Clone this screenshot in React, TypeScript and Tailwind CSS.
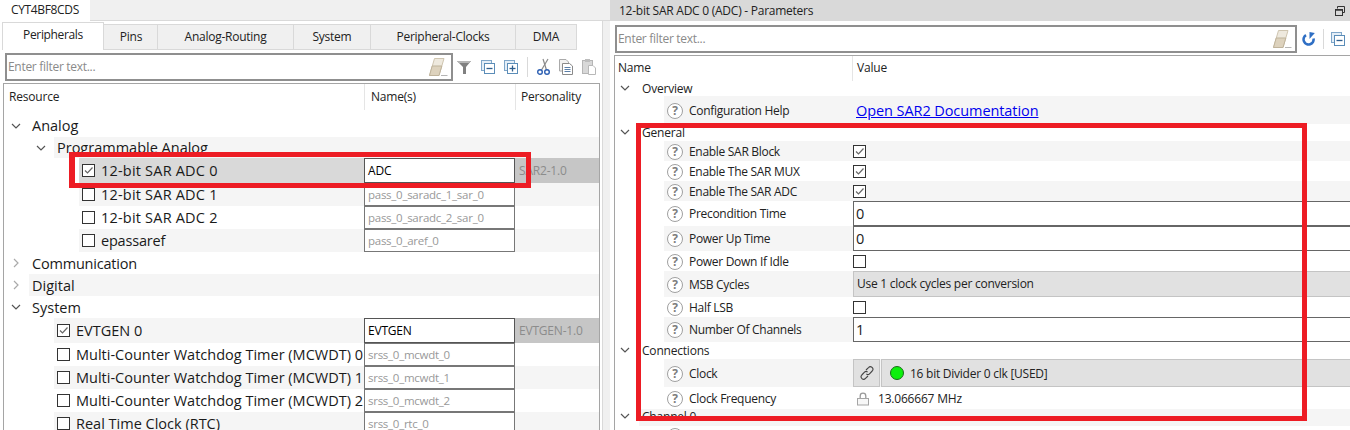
import React from "react";

const FONT = "[font-family:'Open_Sans','Noto_Sans',sans-serif]";

function Chevron({ open }: { open: boolean }) {
  return (
    <svg width="10" height="10" viewBox="0 0 10 10" className="shrink-0">
      {open ? (
        <path d="M1 3 L5 7 L9 3" fill="none" stroke="#555" strokeWidth="1.2" />
      ) : (
        <path d="M3 1 L7 5 L3 9" fill="none" stroke="#aaa" strokeWidth="1.2" />
      )}
    </svg>
  );
}

function Check({ on }: { on: boolean }) {
  return (
    <span className="w-[13px] h-[13px] shrink-0 border border-[#333] bg-white flex items-center justify-center">
      {on && (
        <svg width="11" height="11" viewBox="0 0 11 11">
          <path d="M2 5.5 L4.5 8 L9.5 2.5" fill="none" stroke="#666" strokeWidth="1.2" />
        </svg>
      )}
    </span>
  );
}

function Eraser() {
  return (
    <svg width="20" height="20" viewBox="0 0 20 20" className="shrink-0">
      <path d="M6.5 1.5 H16 L11 18.5 H1.5 Z" fill="#eee9de" stroke="#cfc5b0" />
      <path d="M4.2 9 L13.8 9 L11 18.5 H1.5 Z" fill="#ddd2bd" stroke="#bfb39b" />
      <path d="M13 18.5 H19.5" stroke="#b5b5b5" strokeWidth="1" />
    </svg>
  );
}

function Filter() {
  return (
    <svg width="16" height="16" viewBox="0 0 16 16" className="shrink-0">
      <path d="M1 2 H15 L10 8 V15 H7 V8 Z" fill="#808080" />
      <path d="M1 2 H15 L13 4 H3 Z" fill="#b5b5b5" />
    </svg>
  );
}

function Collapse({ plus }: { plus?: boolean }) {
  return (
    <svg width="14" height="14" viewBox="0 0 14 14" className="shrink-0">
      <rect x="0.5" y="0.5" width="10" height="10" fill="#e4eef7" stroke="#7fa6c9" />
      <rect x="3.5" y="3.5" width="10" height="10" fill="#fff" stroke="#5b8db8" />
      <path d="M5.5 8.5 H11.5" stroke="#2f5f8f" strokeWidth="1.3" />
      {plus && <path d="M8.5 5.5 V11.5" stroke="#2f5f8f" strokeWidth="1.3" />}
    </svg>
  );
}

function Cut() {
  return (
    <svg width="13" height="18" viewBox="0 0 13 18" className="shrink-0">
      <path d="M11 1 L4.5 12" stroke="#8a8a8a" strokeWidth="1.2" />
      <path d="M6 1 L9.5 12" stroke="#8a8a8a" strokeWidth="1.2" />
      <circle cx="3" cy="14" r="2.3" fill="none" stroke="#2c5fb3" strokeWidth="1.4" />
      <circle cx="10" cy="14" r="2.3" fill="none" stroke="#2c5fb3" strokeWidth="1.4" />
    </svg>
  );
}

function Copy() {
  return (
    <svg width="14" height="18" viewBox="0 0 14 18" className="shrink-0">
      <path d="M0.5 1.5 H7 L9.5 4 V13 H0.5 Z" fill="#f2f2f2" stroke="#aaa" />
      <path d="M3.5 5.5 H10.5 L13.5 8 V16.5 H3.5 Z" fill="#fff" stroke="#8a8a8a" />
      <path d="M5.5 9.5 H11.5 M5.5 11.5 H11.5 M5.5 13.5 H11.5" stroke="#5b7fa8" />
    </svg>
  );
}

function Paste() {
  return (
    <svg width="14" height="18" viewBox="0 0 14 18" className="shrink-0">
      <rect x="0.5" y="2.5" width="10" height="13" fill="#d8d8d8" stroke="#b5b5b5" />
      <rect x="3" y="1" width="5" height="3" fill="#bdbdbd" />
      <path d="M6.5 7.5 H11 L13.5 10 V16.5 H6.5 Z" fill="#fff" stroke="#b8b8b8" />
    </svg>
  );
}

function Refresh() {
  return (
    <svg width="14" height="14" viewBox="0 0 14 14" className="shrink-0">
      <path d="M4 3.2 A5 5 0 1 0 11.5 6.5" fill="none" stroke="#2f6fc4" strokeWidth="2.6" />
      <path d="M7.5 0 V7 L12.8 1 Z" fill="#2f6fc4" />
    </svg>
  );
}

function Restore() {
  return (
    <svg width="10" height="10" viewBox="0 0 10 10">
      <path d="M2.5 2.5 V0.5 H9.5 V6.5 H7.5" fill="none" stroke="#333" />
      <rect x="0.5" y="3.5" width="7" height="6" fill="none" stroke="#333" />
      <path d="M0.5 4 H7.5" stroke="#333" strokeWidth="1.5" />
    </svg>
  );
}

function Link() {
  return (
    <svg width="14" height="14" viewBox="0 0 14 14">
      <path d="M6 4 L8.5 1.6 A2.2 2.2 0 0 1 12.2 5 L9.5 7.8 A2.2 2.2 0 0 1 6.4 7.8" fill="none" stroke="#444" strokeWidth="1.1" />
      <path d="M8 10 L5.5 12.4 A2.2 2.2 0 0 1 1.8 9 L4.5 6.2 A2.2 2.2 0 0 1 7.6 6.2" fill="none" stroke="#444" strokeWidth="1.1" />
    </svg>
  );
}

function Lock() {
  return (
    <svg width="14" height="14" viewBox="0 0 14 14">
      <path d="M4.2 6.5 V4 A2.8 2.8 0 0 1 9.8 4 V6.5" fill="none" stroke="#999" strokeWidth="1.3" />
      <rect x="1.5" y="6.5" width="11" height="6.5" fill="#f7f7f7" stroke="#a5a5a5" />
    </svg>
  );
}

function Help() {
  return (
    <span className="w-[16px] h-[16px] shrink-0 rounded-full border-[1.5px] border-[#a0a0a0] bg-white text-[#7d7d7d] text-[12px] font-bold leading-[13px] text-center">
      ?
    </span>
  );
}

function FilterBox({ className }: { className: string }) {
  return (
    <div className={`flex items-center justify-between bg-white border-2 border-[#8f8f8f] pr-[3px] ${className}`}>
      <span className="text-[12px] text-[#8a8a8a] pl-[1px] tracking-[-0.3px]">Enter filter text...</span>
      <Eraser />
    </div>
  );
}

type LeftRow = {
  h: string;
  indent: string;
  bg: string;
  chevron?: "open" | "closed";
  chevronPos?: string;
  check?: boolean;
  label: string;
  low?: boolean;
  tr?: string;
  name?: string;
  nameActive?: boolean;
  personality?: string;
};

const leftRows: LeftRow[] = [
  { h: "h-[22px]", indent: "pl-[25px]", bg: "", chevron: "open", chevronPos: "ml-[7px]", label: "Analog" },
  { h: "h-[21px]", indent: "pl-[50px]", bg: "bg-[#f5f5f5]", chevron: "open", chevronPos: "ml-[32px]", label: "Programmable Analog" },
  { h: "h-[25px]", indent: "pl-[75px]", bg: "bg-[#d9d9d9]", check: true, label: "12-bit SAR ADC 0", tr: "tracking-[0.2px]", name: "ADC", nameActive: true, personality: "SAR2-1.0" },
  { h: "h-[23px]", indent: "pl-[75px]", bg: "bg-[#f5f5f5]", check: false, label: "12-bit SAR ADC 1", tr: "tracking-[0.2px]", name: "pass_0_saradc_1_sar_0" },
  { h: "h-[23px]", indent: "pl-[75px]", bg: "", check: false, label: "12-bit SAR ADC 2", tr: "tracking-[0.2px]", name: "pass_0_saradc_2_sar_0" },
  { h: "h-[23px]", indent: "pl-[75px]", bg: "bg-[#f5f5f5]", check: false, label: "epassaref", tr: "tracking-[-0.2px]", name: "pass_0_aref_0" },
  { h: "h-[22px]", indent: "pl-[25px]", bg: "", chevron: "closed", chevronPos: "ml-[7px]", label: "Communication", low: true, tr: "tracking-[-0.2px]" },
  { h: "h-[22px]", indent: "pl-[25px]", bg: "bg-[#f5f5f5]", chevron: "closed", chevronPos: "ml-[7px]", label: "Digital", low: true },
  { h: "h-[22px]", indent: "pl-[25px]", bg: "", chevron: "open", chevronPos: "ml-[7px]", label: "System", low: true },
  { h: "h-[25px]", indent: "pl-[50px]", bg: "bg-[#f5f5f5]", check: true, label: "EVTGEN 0", name: "EVTGEN", nameActive: true, personality: "EVTGEN-1.0" },
  { h: "h-[23px]", indent: "pl-[50px]", bg: "", check: false, label: "Multi-Counter Watchdog Timer (MCWDT) 0", name: "srss_0_mcwdt_0" },
  { h: "h-[23px]", indent: "pl-[50px]", bg: "bg-[#f5f5f5]", check: false, label: "Multi-Counter Watchdog Timer (MCWDT) 1", name: "srss_0_mcwdt_1" },
  { h: "h-[23px]", indent: "pl-[50px]", bg: "", check: false, label: "Multi-Counter Watchdog Timer (MCWDT) 2", name: "srss_0_mcwdt_2" },
  { h: "h-[23px]", indent: "pl-[50px]", bg: "bg-[#f5f5f5]", check: false, label: "Real Time Clock (RTC)", name: "srss_0_rtc_0" },
];

function LeftTreeRow({ r }: { r: LeftRow }) {
  return (
    <div className={`relative flex shrink-0 ${r.h}`}>
      {r.chevron && (
        <span className={`absolute top-[6px] left-0 ${r.chevronPos}`}>
          <Chevron open={r.chevron === "open"} />
        </span>
      )}
      <div className={`flex w-full ${r.indent}`}>
        <div className={`flex flex-1 min-w-0 ${r.bg}`}>
          <div className={`flex-1 min-w-0 flex items-center gap-[6px] pl-[3px] text-[14.5px] text-[#1a1a1a] whitespace-nowrap ${r.low ? "pt-[2px]" : ""}`}>
            {r.check !== undefined && <Check on={r.check} />}
            <span className={r.tr ?? ""}>{r.label}</span>
          </div>
          {r.name && (
            <div
              className={`w-[151px] shrink-0 bg-white border flex items-center pl-[3px] ${
                r.nameActive ? "text-[12px] text-black border-[#555] tracking-[-0.2px]" : "text-[11.5px] tracking-[-0.27px] text-[#999] border-[#777]"
              }`}
            >
              {r.name}
            </div>
          )}
          {r.name && (
            <div className={`w-[84px] shrink-0 flex items-center pl-[4px] text-[12px] text-[#8c8c8c] tracking-[-0.2px] ${r.personality ? "bg-[#c6c6c6]" : ""}`}>
              {r.personality}
            </div>
          )}
        </div>
      </div>
    </div>
  );
}

function LeftPanel() {
  const tabs = [
    ["Pins", "w-[54px]"],
    ["Analog-Routing", "w-[136px]"],
    ["System", "w-[77px]"],
    ["Peripheral-Clocks", "w-[145px]"],
    ["DMA", "w-[61px]"],
  ];
  return (
    <div className="w-[610px] h-full shrink-0 flex flex-col bg-[#f0f0f0] overflow-hidden">
      <div className="h-[21px] shrink-0 flex border-b border-[#d9d9d9]">
        <div className="w-[90px] h-[21px] bg-white text-[12px] pl-[11px] leading-[20px] tracking-[-0.35px] text-[#222]">CYT4BF8CDS</div>
      </div>
      <div className="flex-1 min-h-0 mr-[7px] border-r border-[#d9d9d9] bg-white flex flex-col">
        <div className="h-[29px] shrink-0 flex items-end pl-[2px] text-[12px] text-[#222] tracking-[-0.25px]">
          <div className="w-[102px] h-[28px] bg-white border border-b-0 border-[#d9d9d9] flex items-center justify-center pb-[3px] tracking-[-0.35px]">Peripherals</div>
          {tabs.map(([t, w]) => (
            <div key={t} className={`${w} h-[26px] bg-[#f0f0f0] border border-l-0 border-[#d9d9d9] flex items-center justify-center ${t === "Pins" ? "pl-[1px]" : ""}`}>
              {t}
            </div>
          ))}
        </div>
        <div className="h-[33px] shrink-0 flex items-start pl-[5px] pt-[3px]">
          <FilterBox className="w-[448px] h-[28px]" />
          <div className="flex items-center h-[28px] ml-[3px] gap-[9px]">
            <Filter />
            <Collapse />
            <Collapse plus />
            <div className="w-px h-[20px] bg-[#d9d9d9]" />
            <Cut />
            <Copy />
            <Paste />
          </div>
        </div>
        <div className="flex-1 min-h-0 ml-[3px] mr-[2px] border border-b-0 border-[#a5a5a5] flex flex-col overflow-hidden">
          <div className="h-[26px] shrink-0 flex text-[12px] text-[#222] tracking-[-0.2px]">
            <div className="w-[361px] flex items-center pl-[5px] border-r border-[#e5e5e5]">Resource</div>
            <div className="w-[151px] flex items-center pl-[6px] border-r border-[#e5e5e5]">Name(s)</div>
            <div className="flex-1 flex items-center pl-[5px]">Personality</div>
          </div>
          <div className="h-[5px] shrink-0" />
          {leftRows.map((r) => (
            <LeftTreeRow key={r.label} r={r} />
          ))}
        </div>
      </div>
    </div>
  );
}

type RightRow =
  | { kind: "group"; label: string; h: string; bg: string; low?: boolean }
  | { kind: "param"; label: string; h: string; bg: string; low?: boolean; value: React.ReactNode };

const Val = ({ children }: { children: React.ReactNode }) => (
  <div className="h-full w-full border border-r-0 border-[#666] flex items-center pl-[2px] text-[14.5px] text-[#222] bg-white">{children}</div>
);

const CheckVal = ({ on }: { on: boolean }) => (
  <div className="h-full flex items-center">
    <Check on={on} />
  </div>
);

const rightRows: RightRow[] = [
  { kind: "group", label: "Overview", h: "h-[15px]", bg: "" },
  {
    kind: "param",
    label: "Configuration Help",
    h: "h-[28px]",
    bg: "bg-[#f5f5f5]",
    low: true,
    value: <span className="h-full flex items-center pl-[3px] pt-[2px] text-[14.5px] text-[#0000ee] underline tracking-[-0.08px]">Open SAR2 Documentation</span>,
  },
  { kind: "group", label: "General", h: "h-[17px]", bg: "", low: true },
  { kind: "param", label: "Enable SAR Block", h: "h-[20px]", bg: "bg-[#f5f5f5]", low: true, value: <CheckVal on /> },
  { kind: "param", label: "Enable The SAR MUX", h: "h-[20px]", bg: "", low: true, value: <CheckVal on /> },
  { kind: "param", label: "Enable The SAR ADC", h: "h-[20px]", bg: "bg-[#f5f5f5]", low: true, value: <CheckVal on /> },
  { kind: "param", label: "Precondition Time", h: "h-[25px]", bg: "", value: <Val>0</Val> },
  { kind: "param", label: "Power Up Time", h: "h-[25px]", bg: "bg-[#f5f5f5]", value: <Val>0</Val> },
  { kind: "param", label: "Power Down If Idle", h: "h-[20px]", bg: "", low: true, value: <CheckVal on={false} /> },
  {
    kind: "param",
    label: "MSB Cycles",
    h: "h-[26px]",
    bg: "bg-[#f5f5f5]",
    low: true,
    value: (
      <div className="h-full w-full bg-[#e1e1e1] border border-r-0 border-[#c4c4c4] flex items-center pl-[3px] text-[12px] text-[#222] tracking-[-0.25px]">
        Use 1 clock cycles per conversion
      </div>
    ),
  },
  { kind: "param", label: "Half LSB", h: "h-[20px]", bg: "", low: true, value: <CheckVal on={false} /> },
  { kind: "param", label: "Number Of Channels", h: "h-[25px]", bg: "bg-[#f5f5f5]", value: <Val>1</Val> },
  { kind: "group", label: "Connections", h: "h-[17px]", bg: "", low: true },
  {
    kind: "param",
    label: "Clock",
    h: "h-[28px]",
    bg: "bg-[#f5f5f5]",
    low: true,
    value: (
      <div className="h-full flex gap-[1px] text-[12px] text-[#222] tracking-[-0.25px]">
        <div className="w-[27px] shrink-0 bg-[#e1e1e1] border border-[#c4c4c4] flex items-center justify-center">
          <Link />
        </div>
        <div className="flex-1 bg-[#e1e1e1] border border-r-0 border-[#c4c4c4] flex items-center pl-[8px] gap-[6px]">
          <span className="w-[14px] h-[14px] rounded-full bg-[#0cf00c] border border-[#1a6b1a]" />
          <span className="pt-[2px]">16 bit Divider 0 clk [USED]</span>
        </div>
      </div>
    ),
  },
  {
    kind: "param",
    label: "Clock Frequency",
    h: "h-[22px]",
    bg: "",
    low: true,
    value: (
      <div className="h-full flex items-center gap-[8px] pl-[3px] pt-[2px] text-[12px] text-[#222] tracking-[-0.2px]">
        <Lock />
        13.066667 MHz
      </div>
    ),
  },
  { kind: "group", label: "Channel 0", h: "h-[17px]", bg: "bg-[#f5f5f5]" },
  { kind: "param", label: "", h: "h-[20px]", bg: "", value: <CheckVal on={false} /> },
];

function RightPanel() {
  return (
    <div className="flex-1 min-w-0 h-full flex flex-col bg-white">
      <div className="h-[21px] shrink-0 bg-[#d9d9d9] flex items-center justify-between pl-[9px] pr-[5px] text-[12px] text-[#222] tracking-[-0.25px]">
        <span>12-bit SAR ADC 0 (ADC) - Parameters</span>
        <Restore />
      </div>
      <div className="h-[34px] shrink-0 flex items-start pl-[5px] pt-[4px]">
        <FilterBox className="w-[682px] h-[28px]" />
        <div className="flex items-center h-[28px] ml-[5px] gap-[7px]">
          <Refresh />
          <div className="w-px h-[20px] bg-[#d9d9d9]" />
          <Collapse />
        </div>
      </div>
      <div className="flex-1 min-h-0 ml-[4px] border-t border-l border-[#a5a5a5] flex flex-col overflow-hidden">
        <div className="h-[25px] shrink-0 flex text-[12px] text-[#222] tracking-[-0.2px]">
          <div className="w-[238px] flex items-center pl-[3px] pb-[2px] border-r border-[#e5e5e5]">Name</div>
          <div className="flex-1 flex items-center pl-[4px] pb-[2px]">Value</div>
        </div>
        {rightRows.map((r, i) =>
          r.kind === "group" ? (
            <div key={i} className={`relative shrink-0 flex ${r.h}`}>
              <span className={`absolute left-[5px] ${r.low ? "top-[3px]" : "top-[2px]"}`}>
                <Chevron open />
              </span>
              <div className={`ml-[24px] flex-1 pl-[3px] text-[12px] leading-[16px] text-[#222] tracking-[-0.2px] whitespace-nowrap ${r.low ? "pt-[1px]" : ""} ${r.bg}`}>{r.label}</div>
            </div>
          ) : (
            <div key={i} className={`shrink-0 flex ml-[49px] ${r.h} ${r.bg}`}>
              <div className={`w-[189px] shrink-0 flex items-center pl-[3px] gap-[6px] text-[12px] text-[#222] tracking-[-0.3px] whitespace-nowrap ${r.low ? "pt-[2px]" : ""}`}>
                <Help />
                {r.label}
              </div>
              <div className="flex-1 min-w-0">{r.value}</div>
            </div>
          ),
        )}
      </div>
    </div>
  );
}

export default function App() {
  return (
    <div className={`relative w-[1350px] h-[430px] overflow-hidden bg-white flex ${FONT}`}>
      <LeftPanel />
      <RightPanel />
      <div className="absolute left-[69px] top-[152px] w-[462px] h-[36px] border-[5px] border-l-[6px] border-[#ed1c24] pointer-events-none" />
      <div className="absolute left-[636px] top-[123px] w-[671px] h-[298px] border-[5px] border-[#ed1c24] pointer-events-none" />
    </div>
  );
}
